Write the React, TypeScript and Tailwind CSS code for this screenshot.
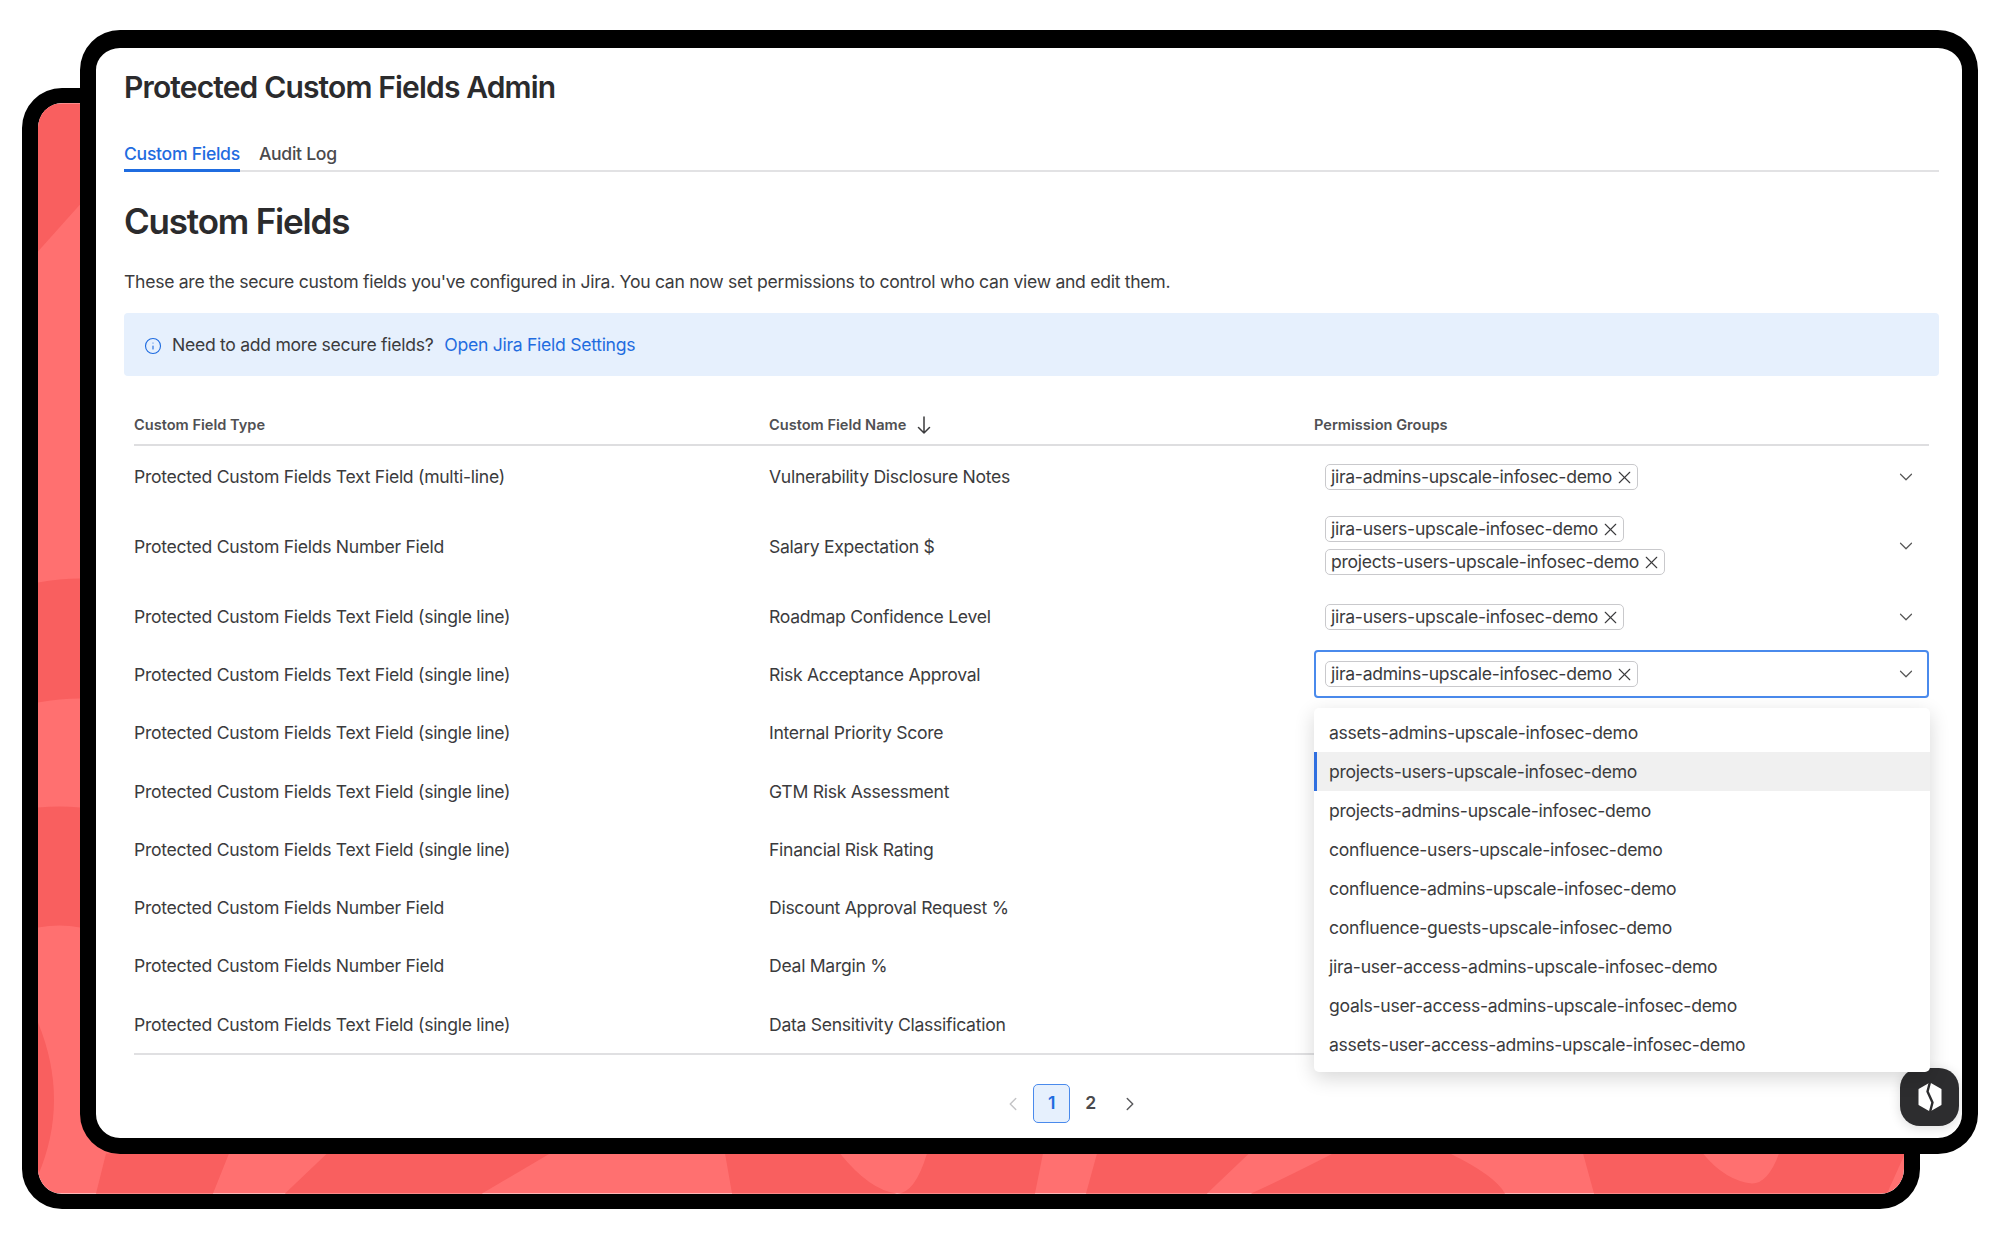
import { ChevronDown, ChevronLeft, ChevronRight, Info, X } from "lucide-react";

type Row = {
  type: string;
  name: string;
  groups: string[];
  height: string;
  focused?: boolean;
};

const rows: Row[] = [
  { type: "Protected Custom Fields Text Field (multi-line)", name: "Vulnerability Disclosure Notes", groups: ["jira-admins-upscale-infosec-demo"], height: "h-[60px]" },
  { type: "Protected Custom Fields Number Field", name: "Salary Expectation $", groups: ["jira-users-upscale-infosec-demo", "projects-users-upscale-infosec-demo"], height: "h-[81px]" },
  { type: "Protected Custom Fields Text Field (single line)", name: "Roadmap Confidence Level", groups: ["jira-users-upscale-infosec-demo"], height: "h-[58px]" },
  { type: "Protected Custom Fields Text Field (single line)", name: "Risk Acceptance Approval", groups: ["jira-admins-upscale-infosec-demo"], height: "h-[58.3px]", focused: true },
  { type: "Protected Custom Fields Text Field (single line)", name: "Internal Priority Score", groups: [], height: "h-[58.3px]" },
  { type: "Protected Custom Fields Text Field (single line)", name: "GTM Risk Assessment", groups: [], height: "h-[58.3px]" },
  { type: "Protected Custom Fields Text Field (single line)", name: "Financial Risk Rating", groups: [], height: "h-[58.3px]" },
  { type: "Protected Custom Fields Number Field", name: "Discount Approval Request %", groups: [], height: "h-[58.3px]" },
  { type: "Protected Custom Fields Number Field", name: "Deal Margin %", groups: [], height: "h-[58.3px]" },
  { type: "Protected Custom Fields Text Field (single line)", name: "Data Sensitivity Classification", groups: [], height: "h-[58.3px]" },
];

const options = [
  "assets-admins-upscale-infosec-demo",
  "projects-users-upscale-infosec-demo",
  "projects-admins-upscale-infosec-demo",
  "confluence-users-upscale-infosec-demo",
  "confluence-admins-upscale-infosec-demo",
  "confluence-guests-upscale-infosec-demo",
  "jira-user-access-admins-upscale-infosec-demo",
  "goals-user-access-admins-upscale-infosec-demo",
  "assets-user-access-admins-upscale-infosec-demo",
];

function Tag({ label }: { label: string }) {
  return (
    <span className="flex h-[26px] w-fit items-center gap-[2px] rounded-[5px] border border-[#c9c9cc] bg-white pl-[5px] pr-[2px]">
      <span>{label}</span>
      <X size={21} strokeWidth={1.3} className="text-[#3b3b3d]" />
    </span>
  );
}

function Backdrop() {
  return (
    <svg viewBox="38 103 1866 1090" className="absolute inset-0 h-full w-full">
      <rect x="38" y="103" width="1866" height="1090" fill="#ff7070" />
      <g fill="#f95f5f">
        <path d="M38 103H80V204L38 251Z" />
        <path d="M38 582Q60 578 80 578V698Q60 698 38 702Z" />
        <path d="M38 807Q60 805 80 807V927Q60 923 38 927Z" />
        <path d="M38 1022Q70 1100 38 1175Z" />
        <path d="M106 1153L96 1193H213L229 1153Z" />
        <path d="M327 1153L285 1193H482L550 1153Z" />
        <path d="M725 1153L732 1193H1035L1043 1153H927Q915 1193 897 1193Q870 1190 840 1153Z" />
        <path d="M1097 1153L1086 1193H1207L1249 1153Z" />
        <path d="M1333 1153Q1280 1180 1251 1193H1505Q1495 1175 1450 1153Z" />
        <path d="M1583 1153L1594 1193H1887L1905 1153H1779Q1768 1183 1752 1183Q1725 1180 1703 1153Z" />
      </g>
    </svg>
  );
}

function App() {
  return (
    <div className="relative h-[1238px] w-[2000px] overflow-hidden bg-white font-['Inter',sans-serif] text-[17.6px] tracking-[-0.29px] text-[#3b3b3d]">
      <div className="absolute left-[22px] top-[88px] h-[1121px] w-[1898px] overflow-hidden rounded-[40px] border-x-[16px] border-y-[15px] border-black">
        <div className="relative h-full w-full overflow-hidden rounded-[24px]">
          <Backdrop />
        </div>
      </div>

      <div className="absolute left-[80px] top-[30px] h-[1124px] w-[1898px] rounded-[40px] border-x-[16px] border-b-[16px] border-t-[18px] border-black bg-white">
        <div className="relative flex h-full flex-col pl-[28px] pr-[23px] pt-[19px]">
          <h1 className="text-[30px] font-semibold leading-[40px] tracking-[-0.85px] text-[#2b2b2d]">Protected Custom Fields Admin</h1>

          <div className="mt-[25px] flex h-[40px] gap-[19px] border-b-2 border-[#e2e2e4]">
            <span className="h-[40px] border-b-[3px] border-[#1f6ce0] pt-[9px] font-medium leading-[26px] text-[#1f6ce0]">Custom Fields</span>
            <span className="pt-[9px] font-medium leading-[26px] text-[#4a4a4d]">Audit Log</span>
          </div>

          <h2 className="mt-[27px] text-[35px] font-semibold leading-[44px] tracking-[-1.2px] text-[#2b2b2d]">Custom Fields</h2>
          <p className="mt-[26px] leading-[26px]">
            These are the secure custom fields you've configured in Jira. You can now set permissions to control who can view and edit them.
          </p>

          <div className="mt-[18px] flex h-[63px] items-center rounded-[4px] bg-[#e6f0fd] pl-[20px] pt-[2px]">
            <Info size={18} strokeWidth={1.5} className="text-[#1f6ce0]" />
            <span className="ml-[10px]">Need to add more secure fields?</span>
            <a className="ml-[11px] text-[#1f6ce0]">Open Jira Field Settings</a>
          </div>

          <div className="mx-[10px] mt-[29px] border-b-2 border-[#e0e0e2]">
            <div className="grid h-[41px] grid-cols-[635px_545px_1fr] items-center border-b-2 border-[#dedee0] pt-[2px] text-[14.6px] font-semibold tracking-normal text-[#505053]">
              <span>Custom Field Type</span>
              <span className="flex items-center gap-[11px]">
                Custom Field Name
                <svg viewBox="0 0 14 18" className="h-[18px] w-[14px]" fill="none" stroke="#3b3b3d" strokeWidth="1.5" strokeLinecap="round" strokeLinejoin="round">
                  <path d="M7 1V17M1.5 11.5L7 17L12.5 11.5" />
                </svg>
              </span>
              <span>Permission Groups</span>
            </div>

            {rows.map((row) => (
              <div key={row.name} className={`grid grid-cols-[635px_545px_1fr] items-center pt-[2px] ${row.height}`}>
                <span>{row.type}</span>
                <span>{row.name}</span>
                {row.groups.length > 0 ? (
                  <div
                    className={`relative flex items-center justify-between rounded-[4px] border-2 pl-[9px] pr-[10px] ${
                      row.focused ? "mb-[2px] h-[48px] border-[#4a8aec]" : "border-transparent"
                    } ${row.groups.length > 1 ? "mb-[4px]" : ""}`}
                  >
                    <div className="flex flex-col gap-[7px]">
                      {row.groups.map((group) => (
                        <Tag key={group} label={group} />
                      ))}
                    </div>
                    <ChevronDown size={22} strokeWidth={1.3} className="text-[#555]" />
                    {row.focused && (
                      <div className="absolute left-[-2px] top-[56px] z-20 w-[616px] rounded-[5px] bg-white pb-[8px] pt-[5px] shadow-[0_6px_20px_rgba(0,0,0,0.16)]">
                        {options.map((option, idx) => (
                          <div
                            key={option}
                            className={
                              idx === 1
                                ? "flex h-[39px] items-center border-l-[3px] border-[#2f6fe0] bg-[#f0f0f0] pl-[12px] pt-[2px]"
                                : "flex h-[39px] items-center pl-[15px] pt-[2px]"
                            }
                          >
                            {option}
                          </div>
                        ))}
                      </div>
                    )}
                  </div>
                ) : (
                  <div />
                )}
              </div>
            ))}
          </div>

          <div className="mt-[29px] flex items-center justify-center gap-[2px] pl-[79px] font-medium">
            <span className="flex h-[39px] w-[37px] items-center justify-center text-[#c4c4c6]">
              <ChevronLeft size={22} strokeWidth={1.6} />
            </span>
            <span className="flex h-[39px] w-[37px] items-center justify-center rounded-[5px] border border-[#4a8aec] bg-[#e6f0fd] font-semibold text-[#1f6ce0]">1</span>
            <span className="flex h-[39px] w-[37px] items-center justify-center font-semibold text-[#4a4a4d]">2</span>
            <span className="flex h-[39px] w-[37px] items-center justify-center text-[#5a5a5d]">
              <ChevronRight size={22} strokeWidth={1.6} />
            </span>
          </div>

          <button className="absolute bottom-[12px] right-[3px] z-10 flex h-[58px] w-[59px] items-center justify-center rounded-[20px] bg-[#2d2d2f] shadow-[0_2px_12px_rgba(0,0,0,0.14)]">
            <svg viewBox="0 0 24 30" className="h-[30px] w-[24px]">
              <path d="M12 1.5L22.5 7.5V22.5L12 28.5L1.5 22.5V7.5Z" fill="#fff" stroke="#fff" strokeWidth="2" strokeLinejoin="round" />
              <path d="M12 0L9.5 9.5L14.5 20.5L12 30" fill="none" stroke="#2d2d2f" strokeWidth="2.4" strokeLinejoin="round" />
            </svg>
          </button>
        </div>
      </div>
    </div>
  );
}

export default App;
